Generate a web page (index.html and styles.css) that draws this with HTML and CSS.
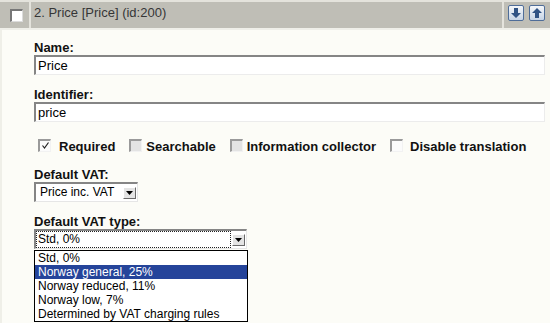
FILE: index.html
```html
<!DOCTYPE html>
<html>
    <head>
        <meta http-equiv="content-type" content="text/html; charset=UTF-8">
        <title>Class attribute: Price</title>
        <link rel="stylesheet" href="styles.css">
    </head>

    <body>
        <div class="panel">
            <!-- attribute header -->
            <div class="panel-head">
                <div class="head-check"><span class="hbox"></span></div>
                <div class="head-title">2. Price [Price] (id:200)</div>
                <div class="head-tools">
                    <svg class="tool" width="16" height="16" viewBox="0 0 16 16">
                        <defs>
                            <linearGradient id="tg" x1="0" y1="0" x2="0" y2="1">
                                <stop offset="0" stop-color="#f6f8fb"/>
                                <stop offset="1" stop-color="#c4d2e4"/>
                            </linearGradient>
                        </defs>
                        <rect x="0.5" y="0.5" width="15" height="15" rx="1.5" fill="url(#tg)" stroke="#4f6d98"/>
                        <path d="M6 3h4v5h3l-5 5-5-5h3z" fill="#2f5284"/>
                    </svg>
                    <svg class="tool" width="16" height="16" viewBox="0 0 16 16">
                        <rect x="0.5" y="0.5" width="15" height="15" rx="1.5" fill="url(#tg)" stroke="#4f6d98"/>
                        <path d="M8 3l5 5h-3v5H6V8H3z" fill="#2f5284"/>
                    </svg>
                </div>
            </div>

            <div class="panel-body">
                <div class="field">
                    <label>Name:</label>
                    <input class="text" type="text" value="Price">
                </div>
                <div class="field">
                    <label>Identifier:</label>
                    <input class="text" type="text" value="price">
                </div>

                <div class="flags">
                    <span class="flag on"><span class="box"><svg width="9" height="9" viewBox="0 0 9 9"><path d="M1.5 4.5l2 2.5 4-5.5" fill="none" stroke="#222" stroke-width="1.2"/></svg></span>Required</span>
                    <span class="flag off"><span class="box"></span>Searchable</span>
                    <span class="flag off"><span class="box"></span>Information collector</span>
                    <span class="flag on last"><span class="box"></span>Disable translation</span>
                </div>

                <div class="field">
                    <label>Default VAT:</label>
                    <div class="select short">
                        <span class="select-value">Price inc. VAT</span>
                        <span class="select-btn"><svg width="7" height="4" viewBox="0 0 7 4"><path d="M0 0h7l-3.5 4z" fill="#000"/></svg></span>
                    </div>
                </div>

                <div class="field">
                    <label>Default VAT type:</label>
                    <div class="select wide focused">
                        <span class="select-value">Std, 0%</span>
                        <span class="select-btn"><svg width="7" height="4" viewBox="0 0 7 4"><path d="M0 0h7l-3.5 4z" fill="#000"/></svg></span>
                        <ul class="dropdown">
                            <li>Std, 0%</li>
                            <li class="hl">Norway general, 25%</li>
                            <li>Norway reduced, 11%</li>
                            <li>Norway low, 7%</li>
                            <li>Determined by VAT charging rules</li>
                        </ul>
                    </div>
                </div>
            </div>
        </div>
    </body>
</html>
```

FILE: styles.css
```css
html {overflow: hidden; background: #fcfcf7;}
body {margin: 0; padding: 0; min-height: 323px; font-family: "Liberation Sans", Arial, sans-serif; color: #111;}

.panel-head {display: flex; height: 26px; background: #bfbeb6; border-top: 2px solid #e4e3dc; border-bottom: 2px solid #efefe9;}
.head-check {width: 29px; border-right: 2px solid #e4e3dc;}
.hbox {display: block; width: 13px; height: 13px; box-sizing: border-box; margin: 7px 0 0 10px; background: #fff;
       border-top: 2px solid #777; border-left: 2px solid #777; border-right: 1px solid #dcdcdc; border-bottom: 1px solid #dcdcdc;}
.head-title {flex: 1; padding-left: 3px; font-size: 13px; line-height: 22px; color: #363636;}
.head-tools {width: 42px; padding-left: 4px; border-left: 2px solid #e4e3dc; display: flex; gap: 5px; align-items: flex-start;}
.tool {margin-top: 3px;}

.panel-body {min-height: 293px; padding: 11px 5px 0 32px; border-left: 2px solid #efefe8;}
.field {margin-bottom: 13px;}
.field label {display: block; font-weight: bold; font-size: 13px; line-height: 13px; margin-bottom: 1px;}

input.text {display: block; width: 100%; height: 20px; box-sizing: border-box; margin: 0; padding: 0 2px; background: #fff;
            font-family: "Liberation Sans", Arial, sans-serif; font-size: 13px; color: #000;
            border-top: 2px solid #858585; border-left: 2px solid #858585; border-right: 1px solid #ececec; border-bottom: 1px solid #ececec; outline: none;}

.flags {display: flex; align-items: flex-start; margin: 17px 0 14px 4px; font-weight: bold; font-size: 13px; line-height: 15px;}
.flag {display: flex; align-items: flex-start; margin-right: 14px;}
.flag .box {width: 13px; height: 13px; box-sizing: border-box; display: flex; align-items: flex-end; justify-content: center; padding-bottom: 1px;
            border-top: 2px solid #9a9a9a; border-left: 2px solid #9a9a9a; border-right: 1px solid #f2f2f2; border-bottom: 1px solid #f2f2f2;}
.flag.on .box {background: #fbfbfb; margin-right: 8px;}
.flag.off .box {background: #e3e3e3; margin-right: 4px;}
.flag.last .box {margin-right: 7px;}

.select {position: relative; display: flex; align-items: center; height: 20px; box-sizing: border-box; background: #fff;
         border-top: 2px solid #858585; border-left: 2px solid #858585; border-right: 1px solid #e6e6e6; border-bottom: 1px solid #e6e6e6;
         font-size: 12px; color: #000;}
.select.short {width: 104px;}
.select.wide {width: 213px;}
.select-value {flex: 1; height: 15px; line-height: 15px; padding-left: 3px; border: 1px dotted transparent; margin: 0 1px 0 0;}
.focused .select-value {border-color: #222; padding-left: 1px;}
.select-btn {width: 13px; height: 12px; box-sizing: border-box; margin-right: 1px; background: #e4e4e4; display: flex; align-items: center; justify-content: center;
             border-top: 1px solid #fff; border-left: 1px solid #fff; border-right: 1px solid #6a6a6a; border-bottom: 1px solid #6a6a6a;}

.dropdown {position: absolute; top: 19px; left: -2px; width: 214px; box-sizing: border-box; margin: 0; padding: 0; list-style: none;
           background: #fff; border: 1px solid #000; font-size: 12px; z-index: 2;}
.dropdown li {height: 14px; line-height: 14px; padding-left: 3px; white-space: nowrap;}
.dropdown li.hl {background: #25449a; color: #fff;}
```
